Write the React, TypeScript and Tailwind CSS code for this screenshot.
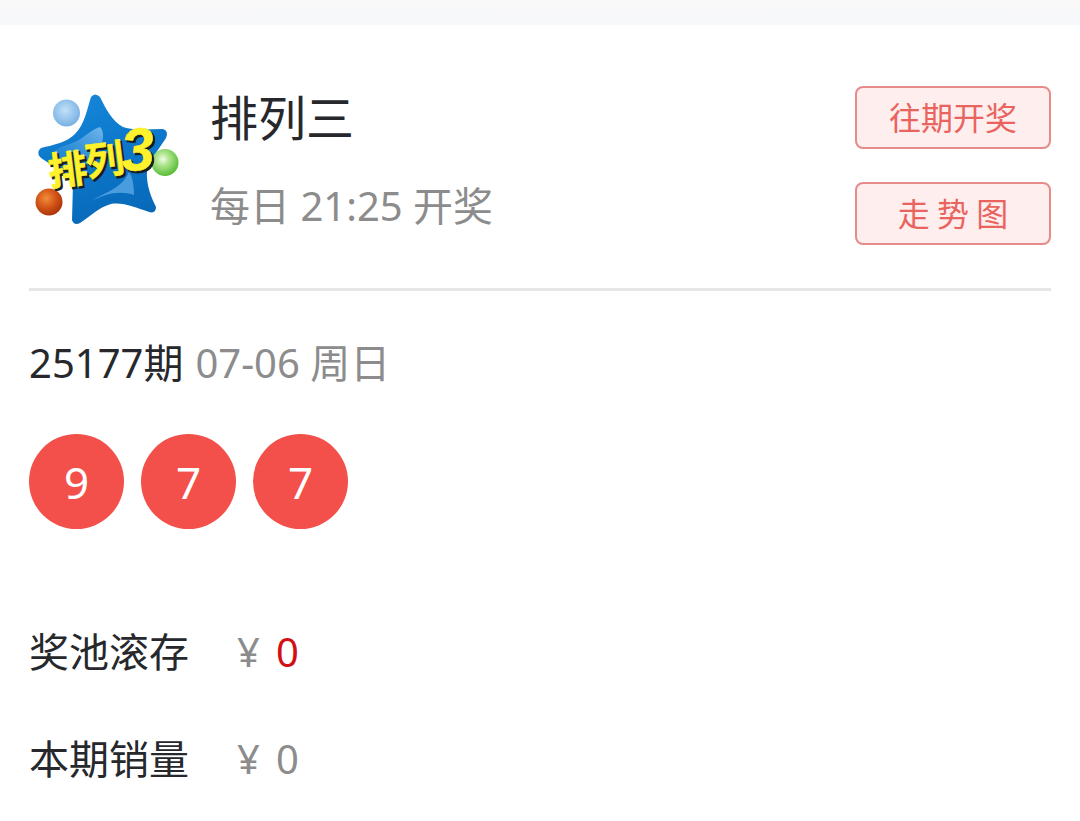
type DrawStat = {
  label: string;
  amount: string;
  highlight?: boolean;
};

const numbers = [9, 7, 7];

const stats: DrawStat[] = [
  { label: "奖池滚存", amount: "0", highlight: true },
  { label: "本期销量", amount: "0" },
];

export default function App() {
  return (
    <div className="min-h-screen bg-white font-['Noto_Sans','Noto_Sans_CJK_SC',sans-serif] text-[#26282c]">
      <div className="h-[25px] bg-linear-to-b from-[#faf9f9] to-[#f6f8fb]" />

      <main className="px-[29px]">
        <header className="flex items-start justify-between border-b-3 border-[#e6e6e6] pt-[61px] pb-[43px]">
          <div className="flex">
            <LotteryLogo />
            <div className="ml-[30px]">
              <h1 className="text-5xl leading-[64px]">排列三</h1>
              <p className="mt-6 text-[40px] leading-[64px] text-[#8c8c8c]">每日 21:25 开奖</p>
            </div>
          </div>
          <nav className="flex w-[196px] flex-col gap-[33px]">
            <ActionButton>往期开奖</ActionButton>
            <ActionButton>走 势 图</ActionButton>
          </nav>
        </header>

        <section className="pt-10">
          <h2 className="text-[40px] leading-[64px]">
            25177期<span className="ml-3 text-[#8c8c8c]">07-06 周日</span>
          </h2>
          <ul className="mt-[39px] flex gap-[17px]">
            {numbers.map((value, index) => (
              <li key={index} className="flex size-[95px] items-center justify-center rounded-full bg-[#f4504b] text-[44px] text-white">
                {value}
              </li>
            ))}
          </ul>
        </section>

        <dl className="mt-[91px] flex flex-col gap-[43px] text-[40px] leading-[64px]">
          {stats.map((stat) => (
            <div key={stat.label} className="flex">
              <dt>{stat.label}</dt>
              <dd className="ml-12 flex gap-4 text-[#8c8c8c]">
                <span>¥</span>
                <span className={stat.highlight ? "text-[#d40f14]" : ""}>{stat.amount}</span>
              </dd>
            </div>
          ))}
        </dl>
      </main>
    </div>
  );
}

function ActionButton({ children }: { children: string }) {
  return (
    <button type="button" className="h-[63px] rounded-lg border-2 border-[#e58c8b] bg-[#ffeeee] pb-1 font-['Noto_Sans_CJK_SC',sans-serif] text-[32px] leading-none text-[#e9645f]">
      {children}
    </button>
  );
}

function LogoText() {
  return (
    <>
      <text x="28" y="104" fontSize="39" transform="rotate(-7 46 88)">排</text>
      <text x="65" y="94" fontSize="39" transform="rotate(-7 84 78)">列</text>
      <text x="101" y="90" fontSize="60" transform="rotate(-5 118 70)" className="font-['Liberation_Sans',sans-serif] italic">3</text>
    </>
  );
}

function LotteryLogo() {
  return (
    <svg viewBox="0 0 180 160" className="mt-[-6px] mr-[-20px] ml-[-9px] h-[160px] w-[180px] shrink-0" role="img" aria-label="排列3">
      <defs>
        <linearGradient id="star" x1="0.3" y1="0" x2="0.6" y2="1">
          <stop offset="0" stopColor="#1686d8" />
          <stop offset="0.45" stopColor="#0c78cb" />
          <stop offset="1" stopColor="#0868b8" />
        </linearGradient>
        <linearGradient id="shine" x1="1" y1="0" x2="0" y2="1">
          <stop offset="0" stopColor="#8cc3f2" stopOpacity="0.8" />
          <stop offset="1" stopColor="#4ba2e5" stopOpacity="0.1" />
        </linearGradient>
        <radialGradient id="blueBall" cx="0.45" cy="0.4" r="0.6">
          <stop offset="0" stopColor="#c2e0f8" />
          <stop offset="1" stopColor="#77b1e4" />
        </radialGradient>
        <radialGradient id="greenBall" cx="0.42" cy="0.38" r="0.62">
          <stop offset="0" stopColor="#f1fce8" />
          <stop offset="0.35" stopColor="#b3e793" />
          <stop offset="1" stopColor="#58bd35" />
        </radialGradient>
        <radialGradient id="orangeBall" cx="0.4" cy="0.36" r="0.64">
          <stop offset="0" stopColor="#f08e3c" />
          <stop offset="0.5" stopColor="#d75a1a" />
          <stop offset="1" stopColor="#ac350b" />
        </radialGradient>
      </defs>
      <path
        d="M71 17 Q75 12 80 17 C86 29 92 41 103 47 C115 51 129 49 143 49 Q149 51 146 58 C140 68 129 80 127 91 C126 104 131 117 136 127 Q136 134 129 132 C117 128 103 122 91 124 C79 127 71 136 60 143 Q54 146 52 140 L53 103 C48 91 31 86 20 77 Q16 72 21 68 C34 65 47 62 55 54 C65 44 67 29 71 17Z"
        fill="url(#star)"
      />
      <path d="M80 47 C86 53 83 66 74 78 L42 88 C35 83 32 77 33 73 C39 65 50 65 57 61 C65 57 70 50 80 47Z" fill="url(#shine)" />
      <path d="M71 121 C88 111 102 108 109 92 Q114 99 114 115 C99 110 86 114 71 121Z" fill="#6cb5ed" fillOpacity="0.65" />
      <circle cx="46.500" cy="33" r="13.500" fill="url(#blueBall)" />
      <circle cx="145" cy="82.500" r="13.500" fill="url(#greenBall)" />
      <circle cx="29" cy="122" r="13.500" fill="url(#orangeBall)" />
      <g className="font-['Noto_Sans_CJK_SC',sans-serif] font-bold">
        <g fill="#171d20" stroke="#171d20" strokeWidth="1" transform="translate(2 2)">
          <LogoText />
        </g>
        <g fill="#fff12b" stroke="#fff12b" strokeWidth="0.5">
          <LogoText />
        </g>
      </g>
    </svg>
  );
}
